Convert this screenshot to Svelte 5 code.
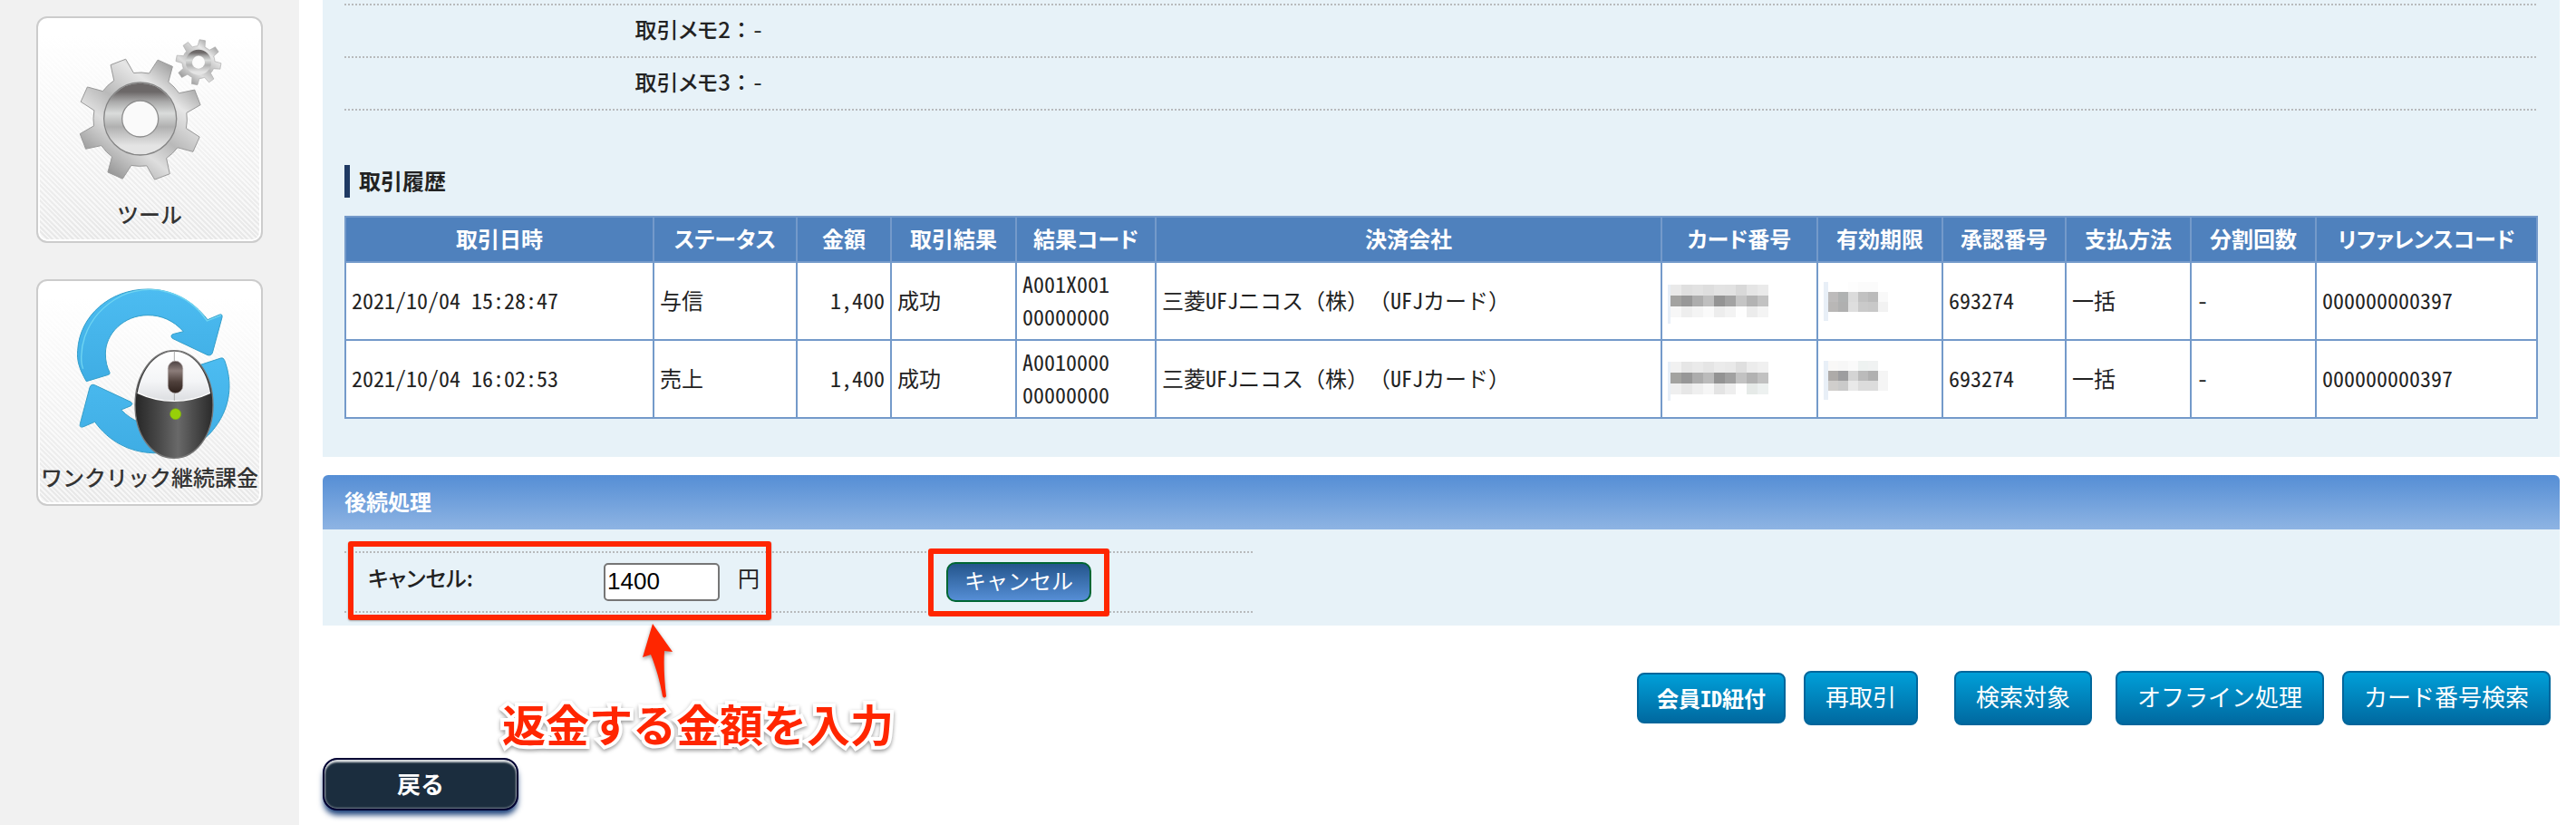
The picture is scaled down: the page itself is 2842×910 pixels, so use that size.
<script lang="ts">
	type Mosaic = { strip: number; cell: number; top: number; rows: string[][] };

	const memos = [
		{ label: '取引メモ2', value: '-' },
		{ label: '取引メモ3', value: '-' }
	];

	const columns = [
		{ title: '取引日時', width: 340 },
		{ title: 'ステータス', width: 158 },
		{ title: '金額', width: 104 },
		{ title: '取引結果', width: 138 },
		{ title: '結果コード', width: 154 },
		{ title: '決済会社', width: 0 },
		{ title: 'カード番号', width: 172 },
		{ title: '有効期限', width: 138 },
		{ title: '承認番号', width: 136 },
		{ title: '支払方法', width: 138 },
		{ title: '分割回数', width: 138 },
		{ title: 'リファレンスコード', width: 244 }
	];

	const history = [
		{
			date: '2021/10/04 15:28:47',
			status: '与信',
			amount: '1,400',
			result: '成功',
			codes: ['A001X001', '00000000'],
			company: '三菱UFJニコス（株）（UFJカード）',
			card: {
				strip: 3,
				cell: 12,
				top: 11,
				rows: [
					['#e9e9e9', '#dfdfdf', '#e2e2e2', '#dedede', '#e3e3e3', '#e2e2e2', '#d9d9d9', '#e5e5e5', '#eaeaea'],
					['#a3a3a1', '#989898', '#adadad', '#bfbfbf', '#949494', '#a3a3a3', '#c5c5c5', '#b3b3b3', '#c2c2c2'],
					['#f7f7f7', '#eeeeee', '#f4f4f4', '#fafafa', '#ededed', '#f3f3f3', '#fefefe', '#ececec', '#f4f4f4']
				]
			},
			expiry: {
				strip: 5,
				cell: 11,
				top: 8,
				rows: [
					['#ffffff', '#ffffff', '#fdfdfd', '#fbfbfb', '#fbfbfb', '#ffffff'],
					['#bdbbbb', '#b0b2b2', '#dbdbdb', '#c1c1c1', '#bbbbbb', '#f9f9f9'],
					['#b9b7b6', '#b0b0b0', '#dedede', '#cacaca', '#c8c8c8', '#f2f2f2']
				]
			},
			approval: '693274',
			method: '一括',
			installments: '-',
			reference: '000000000397'
		},
		{
			date: '2021/10/04 16:02:53',
			status: '売上',
			amount: '1,400',
			result: '成功',
			codes: ['A0010000', '00000000'],
			company: '三菱UFJニコス（株）（UFJカード）',
			card: {
				strip: 3,
				cell: 12,
				top: 10,
				rows: [
					['#f1f1f1', '#e6e6e6', '#eaeaea', '#e5e5e5', '#ebebeb', '#e9e9e9', '#dfdfdf', '#ececec', '#f0f0f0'],
					['#a3a3a0', '#979797', '#acacac', '#bbbbbb', '#939393', '#a1a1a1', '#c2c2c2', '#b2b2b2', '#c1c1c1'],
					['#efefef', '#e7e7e7', '#efefef', '#f6f6f6', '#e4e4e4', '#eeeeee', '#fefefe', '#e6eae8', '#edf1f0']
				]
			},
			expiry: {
				strip: 5,
				cell: 11,
				top: 9,
				rows: [
					['#f9f8f7', '#f7f7f7', '#fafafa', '#eef2f1', '#f0f2f2', '#ffffff'],
					['#aeaba9', '#9d9d9f', '#d4d4d4', '#bbbbbb', '#b0b0b0', '#f5f5f5'],
					['#d0cecc', '#cacaca', '#e9e9e9', '#dcdcdc', '#dcdcdc', '#f5f5f5']
				]
			},
			approval: '693274',
			method: '一括',
			installments: '-',
			reference: '000000000397'
		}
	];

	let amount = $state('1400');

	// eight teeth, narrower at the tip than at the root
	function gear(cx: number, cy: number, tip: number, root: number, start: number) {
		const at = (r: number, deg: number) => {
			const a = (deg * Math.PI) / 180;
			return `${(cx + r * Math.cos(a)).toFixed(1)} ${(cy + r * Math.sin(a)).toFixed(1)}`;
		};
		let d = '';
		for (let i = 0; i < 8; i++) {
			const a = start + i * 45;
			d += `${i ? 'L' : 'M'}${at(root, a - 13)}L${at(tip, a - 7.5)}L${at(tip, a + 7.5)}L${at(root, a + 13)}`;
			d += `A${root} ${root} 0 0 1 ${at(root, a + 32)}`;
		}
		return d + 'Z';
	}
</script>

{#snippet mosaic(m: Mosaic)}
	<svg class="mosaic" width="112" height="56" viewBox="0 0 112 56" aria-hidden="true">
		<rect x="0" y={m.top} width={m.strip} height="43" fill="#e8eff7" />
		{#each m.rows as row, r}
			{#each row as fill, c}
				<rect x={m.strip + c * m.cell} y={m.top + r * m.cell} width={m.cell} height={m.cell} {fill} />
			{/each}
		{/each}
	</svg>
{/snippet}

<div class="page">
	<nav class="sidebar">
		<a class="tile" href="#tools">
			<svg viewBox="127 60 738 594" aria-hidden="true">
				<defs>
					<linearGradient id="metal" x1="0.1" y1="1" x2="0.9" y2="0">
						<stop offset="0" stop-color="#777" />
						<stop offset="0.2" stop-color="#b4b4b4" />
						<stop offset="0.35" stop-color="#dedede" />
						<stop offset="0.5" stop-color="#b9b9b9" />
						<stop offset="0.72" stop-color="#e6e6e6" />
						<stop offset="0.86" stop-color="#b0b0b0" />
						<stop offset="1" stop-color="#777" />
					</linearGradient>
					<linearGradient id="hub" x1="0" y1="0" x2="0" y2="1">
						<stop offset="0" stop-color="#6c6868" />
						<stop offset="0.18" stop-color="#a9a9a9" />
						<stop offset="0.4" stop-color="#dadcdb" />
						<stop offset="0.65" stop-color="#b0b0b0" />
						<stop offset="1" stop-color="#e4e4e4" />
					</linearGradient>
				</defs>
				<path d={gear(465, 395, 205, 155, -111)} fill="url(#metal)" stroke="#999" stroke-width="3" />
				<circle cx="465" cy="393" r="89" fill="none" stroke="url(#hub)" stroke-width="58" />
				<circle cx="465" cy="393" r="120" fill="none" stroke="#858585" stroke-width="4" />
				<circle cx="465" cy="393" r="60" fill="#fafafa" stroke="#8d8d8d" stroke-width="4" />
				<path d={gear(658, 206, 75, 54, -80)} fill="url(#metal)" stroke="#aaa" stroke-width="2" />
				<circle cx="658" cy="206" r="32" fill="none" stroke="url(#hub)" stroke-width="20" />
				<circle cx="658" cy="206" r="21" fill="#fcfcfc" />
			</svg>
			<span>ツール</span>
		</a>
		<a class="tile" href="#recurring">
			<svg viewBox="127 60 738 594" aria-hidden="true">
				<defs>
					<linearGradient id="sky" x1="0" y1="0" x2="0" y2="1">
						<stop offset="0" stop-color="#4cbcf1" />
						<stop offset="1" stop-color="#3fade4" />
					</linearGradient>
					<linearGradient id="shell" x1="0" y1="0" x2="1" y2="0">
						<stop offset="0" stop-color="#262626" />
						<stop offset="0.3" stop-color="#484848" />
						<stop offset="0.55" stop-color="#696969" />
						<stop offset="0.75" stop-color="#4c4c4c" />
						<stop offset="1" stop-color="#2a2a2a" />
					</linearGradient>
					<linearGradient id="buttons" x1="0" y1="0" x2="0" y2="1">
						<stop offset="0" stop-color="#fff" />
						<stop offset="0.6" stop-color="#f4f5f7" />
						<stop offset="1" stop-color="#dcdee1" />
					</linearGradient>
					<linearGradient id="wheel" x1="0" y1="0" x2="0" y2="1">
						<stop offset="0" stop-color="#4d4242" />
						<stop offset="0.3" stop-color="#8c7d7a" />
						<stop offset="0.65" stop-color="#4f403b" />
						<stop offset="1" stop-color="#2f221d" />
					</linearGradient>
				</defs>
				<g fill="url(#sky)" stroke="#359fca" stroke-width="3" stroke-linejoin="round">
					<path d="M287 392C262 350 255 320 258 290C264 175 365 87 490 87C570 87 640 125 688 188L728 171Q738 168 736 180L704 298Q700 308 688 305L572 250Q563 242 572 236L608 227C575 190 535 173 490 173C410 173 350 235 350 300C350 325 355 345 364 362Q366 368 360 370Z" />
					<path d="M298 412Q302 400 314 404L434 460Q443 466 434 473L402 486C440 525 480 540 530 535C640 520 690 430 665 337L732 315Q740 312 744 322C770 390 770 480 700 560C650 615 580 632 505 629C430 626 360 590 315 526L275 543Q263 545 266 533Z" />
				</g>
				<path d="M276 350C262 320 262 180 405 108C510 62 625 100 686 192L733 173" fill="none" stroke="#6fd5f2" stroke-width="4" />
				<path d="M448 470C448 370 505 290 577 290C649 290 706 370 706 470C706 570 650 646 577 646C504 646 448 570 448 470Z" fill="url(#shell)" stroke="#777" stroke-width="4" />
				<path d="M456 430C470 350 518 293 577 293C636 293 684 350 697 430C620 466 533 466 456 430Z" fill="url(#buttons)" />
				<path d="M456 430C533 466 620 466 697 430" fill="none" stroke="#fff" stroke-width="4" />
				<path d="M578 293V456" stroke="#aaa" stroke-width="3" />
				<rect x="557" y="325" width="49" height="106" rx="24" fill="url(#wheel)" stroke="#b0a8a8" stroke-width="2" />
				<circle cx="582" cy="500" r="18" fill="#97cf08" stroke="#78aa12" stroke-width="2" />
			</svg>
			<span>ワンクリック継続課金</span>
		</a>
	</nav>

	<main>
		<section class="panel">
			<dl>
				{#each memos as memo}
					<div class="memo">
						<dt><span>{memo.label}</span>：</dt>
						<dd>{memo.value}</dd>
					</div>
				{/each}
			</dl>

			<h2>取引履歴</h2>

			<table>
				<colgroup>
					{#each columns as col}
						<col style:width={col.width ? `${col.width}px` : 'auto'} />
					{/each}
				</colgroup>
				<thead>
					<tr>
						{#each columns as col}
							<th scope="col">{col.title}</th>
						{/each}
					</tr>
				</thead>
				<tbody>
					{#each history as row}
						<tr>
							<td>{row.date}</td>
							<td>{row.status}</td>
							<td class="num">{row.amount}</td>
							<td>{row.result}</td>
							<td>{row.codes[0]}<br />{row.codes[1]}</td>
							<td>{row.company}</td>
							<td>{@render mosaic(row.card)}</td>
							<td>{@render mosaic(row.expiry)}</td>
							<td>{row.approval}</td>
							<td>{row.method}</td>
							<td>{row.installments}</td>
							<td>{row.reference}</td>
						</tr>
					{/each}
				</tbody>
			</table>
		</section>

		<section class="follow-up">
			<h2 class="bar">後続処理</h2>
			<div class="body">
				<form class="cancel-row" onsubmit={(e) => e.preventDefault()}>
					<label for="amount">キャンセル:</label>
					<input id="amount" type="text" bind:value={amount} />
					<span class="unit">円</span>
					<button class="cancel" type="submit">キャンセル</button>
					<div class="mark mark-amount"></div>
					<div class="mark mark-button"></div>
					<div class="note">
						<svg width="44" height="88" viewBox="0 0 44 88" aria-hidden="true">
							<path d="M20 2L42 33L33 32C32 48 33 64 35 82Q33 85 31 82C28 65 24 51 18 36L9 39Z" fill="#ff2600" />
						</svg>
						<p>返金する金額を入力</p>
					</div>
				</form>
			</div>
		</section>

		<div class="actions">
			<button class="action small" type="button">会員ID紐付</button>
			<button class="action" type="button">再取引</button>
			<button class="action search" type="button">検索対象</button>
			<button class="action offline" type="button">オフライン処理</button>
			<button class="action" type="button">カード番号検索</button>
		</div>

		<button class="back" type="button">戻る</button>
	</main>
</div>

<style>
	:global(body) {
		background: #fff;
		color: #222;
		font-family: 'Noto Sans CJK JP', 'Noto Sans', sans-serif;
		font-size: 24px;
		line-height: 36px;
		text-spacing-trim: space-all;
	}

	.page {
		display: flex;
		min-height: 100vh;
	}

	.sidebar {
		box-sizing: border-box;
		flex: none;
		display: flex;
		flex-direction: column;
		gap: 40px;
		width: 330px;
		padding: 18px 40px;
		background: #f1f1f1;
	}

	.tile {
		box-sizing: border-box;
		height: 250px;
		border: 2px solid #ccc;
		border-radius: 12px;
		box-shadow: inset 0 0 0 2px #fff;
		background:
			linear-gradient(#fff 8%, rgba(255, 255, 255, 0.2)),
			repeating-linear-gradient(45deg, #e2e2e2 0 2px, #f4f4f4 2px 4px);
		color: #333;
		font-weight: 500;
		text-align: center;
		text-decoration: none;
		white-space: nowrap;
	}

	.tile svg {
		display: block;
		width: 100%;
		height: 198px;
	}

	.tile span {
		display: block;
	}

	main {
		flex: 1;
		min-width: 0;
		padding: 0 18px 16px 26px;
	}

	.panel {
		padding: 4px 24px 42px;
		background: #e7f2f8;
	}

	dl {
		margin: 0 0 60px;
		padding-top: 2px;
		background: repeating-linear-gradient(90deg, #b8babc 0 2px, transparent 2px 4px) top / 100% 2px no-repeat;
	}

	.memo {
		display: flex;
		padding: 8px 0 14px;
		background: repeating-linear-gradient(90deg, #b8babc 0 2px, transparent 2px 4px) bottom / 100% 2px no-repeat;
	}

	dt {
		width: 450px;
		text-align: right;
		font-weight: 500;
	}

	dt span {
		font-feature-settings: 'palt';
	}

	dd {
		margin: 0;
		font-family: 'Noto Sans Mono CJK JP', 'Noto Sans CJK JP', monospace;
	}

	h2 {
		margin: 0 0 20px;
		padding: 0 0 2px 10px;
		border-left: 6px solid #1f3a63;
		font-size: 24px;
		line-height: 34px;
	}

	table {
		width: 100%;
		table-layout: fixed;
		border-collapse: collapse;
	}

	th,
	td {
		border: 2px solid #749aca;
		padding: 5px 6px 7px;
	}

	th {
		background: #4f81bd;
		color: #fff;
		font-feature-settings: 'palt';
		white-space: nowrap;
	}

	td {
		background: #fff;
		font-family: 'Noto Sans Mono CJK JP', 'DejaVu Sans Mono', 'Noto Sans CJK JP', monospace;
		text-align: left;
	}

	.num {
		text-align: right;
	}

	.mosaic {
		display: block;
	}

	.follow-up {
		margin-top: 20px;
	}

	.bar {
		margin: 0;
		padding: 12px 24px 14px;
		border: 0;
		border-radius: 6px 6px 0 0;
		background: linear-gradient(#558ed5, #8eb4e3);
		color: #fff;
	}

	.body {
		padding: 24px 24px 14px;
		background: #e7f2f8;
	}

	.cancel-row {
		position: relative;
		display: flex;
		align-items: center;
		box-sizing: border-box;
		width: 1002px;
		max-width: 100%;
		padding: 12px 26px;
		background:
			repeating-linear-gradient(90deg, #b8babc 0 2px, transparent 2px 4px) top / 100% 2px no-repeat,
			repeating-linear-gradient(90deg, #b8babc 0 2px, transparent 2px 4px) bottom / 100% 2px no-repeat;
	}

	label {
		width: 260px;
		padding-bottom: 10px;
		font-feature-settings: 'palt';
		font-weight: 500;
		line-height: 32px;
	}

	input {
		box-sizing: border-box;
		width: 128px;
		height: 42px;
		margin: 0;
		padding: 0 2px 2px;
		border: 2px solid #767676;
		border-radius: 5px;
		background: #fff;
		color: #000;
		font: 26px 'Liberation Sans', Arial, sans-serif;
	}

	.unit {
		box-sizing: border-box;
		width: 250px;
		padding: 0 0 10px 20px;
		line-height: 32px;
	}

	.cancel {
		box-sizing: border-box;
		width: 160px;
		height: 44px;
		padding: 0 0 4px;
		border: 2px solid #063;
		border-radius: 10px;
		background: linear-gradient(#24558c, #558ed5);
		color: #fff;
		font: inherit;
		line-height: 36px;
		white-space: nowrap;
	}

	/* red marks drawn over the form */
	.mark {
		position: absolute;
		box-sizing: border-box;
		border: 6px solid #ff2600;
		border-radius: 3px;
		pointer-events: none;
	}

	.mark-amount {
		top: -11px;
		left: 4px;
		width: 467px;
		height: 87px;
		box-shadow: 0 1px 2px rgba(0, 0, 0, 0.3);
	}

	.mark-button {
		top: -3px;
		left: 644px;
		width: 200px;
		height: 75px;
	}

	.note {
		position: absolute;
		top: 78px;
		left: 174px;
		color: #ff2600;
		pointer-events: none;
		filter: drop-shadow(0 2px 2px rgba(0, 0, 0, 0.4));
	}

	.note svg {
		display: block;
		margin-left: 146px;
	}

	.note p {
		margin: 0;
		font-size: 48px;
		font-weight: 700;
		line-height: 46px;
		white-space: nowrap;
		-webkit-text-stroke: 8px #fff;
		paint-order: stroke fill;
	}

	.actions {
		display: flex;
		align-items: center;
		justify-content: flex-end;
		gap: 20px;
		margin-top: 50px;
		padding-right: 10px;
	}

	.action {
		box-sizing: border-box;
		height: 60px;
		padding: 0 22px 6px;
		border: 2px solid #00669b;
		border-radius: 8px;
		background: linear-gradient(#009fd8, #0069a0);
		color: #fff;
		font: 26px 'Noto Sans CJK JP', 'Noto Sans', sans-serif;
		white-space: nowrap;
	}

	.small {
		height: 56px;
		padding: 0 20px 2px;
		font: 700 24px 'Noto Sans Mono CJK JP', 'Noto Sans CJK JP', monospace;
	}

	.search {
		margin-left: 20px;
	}

	.offline {
		margin-left: 6px;
	}

	.back {
		display: block;
		box-sizing: border-box;
		width: 216px;
		height: 58px;
		margin-top: 36px;
		padding: 0 0 4px;
		border: 2px solid #003;
		border-radius: 16px;
		background: #1b2d3e;
		box-shadow:
			inset 0 3px 2px rgba(255, 255, 255, 0.75),
			inset 0 0 2px 1px rgba(255, 255, 255, 0.4),
			0 6px 6px -1px #1f447c;
		color: #fff;
		font: 700 26px 'Noto Sans CJK JP', 'Noto Sans', sans-serif;
	}
</style>
